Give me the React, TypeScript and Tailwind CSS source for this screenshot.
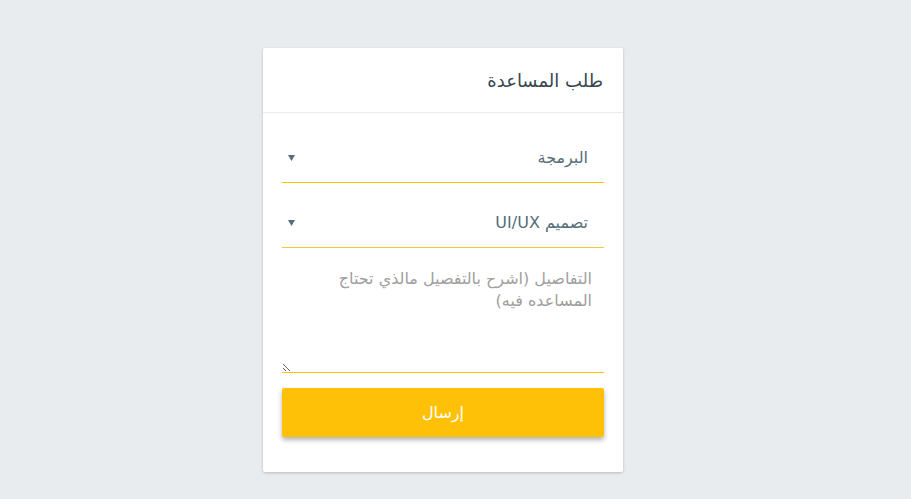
import React from "react";

const font = { fontFamily: '"DejaVu Sans", "Noto Sans", sans-serif' };

function Caret() {
  return (
    <svg width="7" height="6" viewBox="0 0 7 6" className="shrink-0">
      <path d="M0 0 H7 L3.5 6 Z" fill="#546e7a" />
    </svg>
  );
}

function FakeSelect({ label, line }: { label: string; line: string }) {
  return (
    <div className={`flex h-[50px] items-center justify-between border-b pr-4 pl-[6px] ${line}`}>
      <span className="text-[16px] text-[#546e7a]">{label}</span>
      <Caret />
    </div>
  );
}

export default function App() {
  return (
    <div className="min-h-[499px] w-full bg-[#e9ecef] pt-12" style={font}>
      <div dir="rtl" className="ml-[263px] w-[360px] rounded-[2px] bg-white shadow-[0_1px_3px_rgba(0,0,0,0.2)]">
        <div className="flex h-[65px] items-center border-b border-[#e9ecef] px-5">
          <h1 className="text-[18px] font-normal text-[#37474f]">طلب المساعدة</h1>
        </div>
        <div className="flex flex-col gap-[15px] px-[19px] pt-5 pb-[35px]">
          <FakeSelect label="البرمجة" line="border-[#fdc300]" />
          <FakeSelect label="تصميم UI/UX" line="border-[#f2c53d]" />
          <textarea
            dir="rtl"
            placeholder="التفاصيل (اشرح بالتفصيل مالذي تحتاج المساعده فيه)"
            className="block h-[110px] w-full border-0 border-b border-solid border-b-[#fdc300] px-3 pt-[5px] text-[16px] leading-[22px] text-[#546e7a] outline-none placeholder:text-[#9e9e9e]"
            style={font}
          />
          <button
            type="button"
            className="h-[49px] w-full rounded-[2px] bg-[#ffc107] text-[16px] text-white shadow-[0_3px_5px_rgba(0,0,0,0.3)]"
            style={font}
          >
            إرسال
          </button>
        </div>
      </div>
    </div>
  );
}
